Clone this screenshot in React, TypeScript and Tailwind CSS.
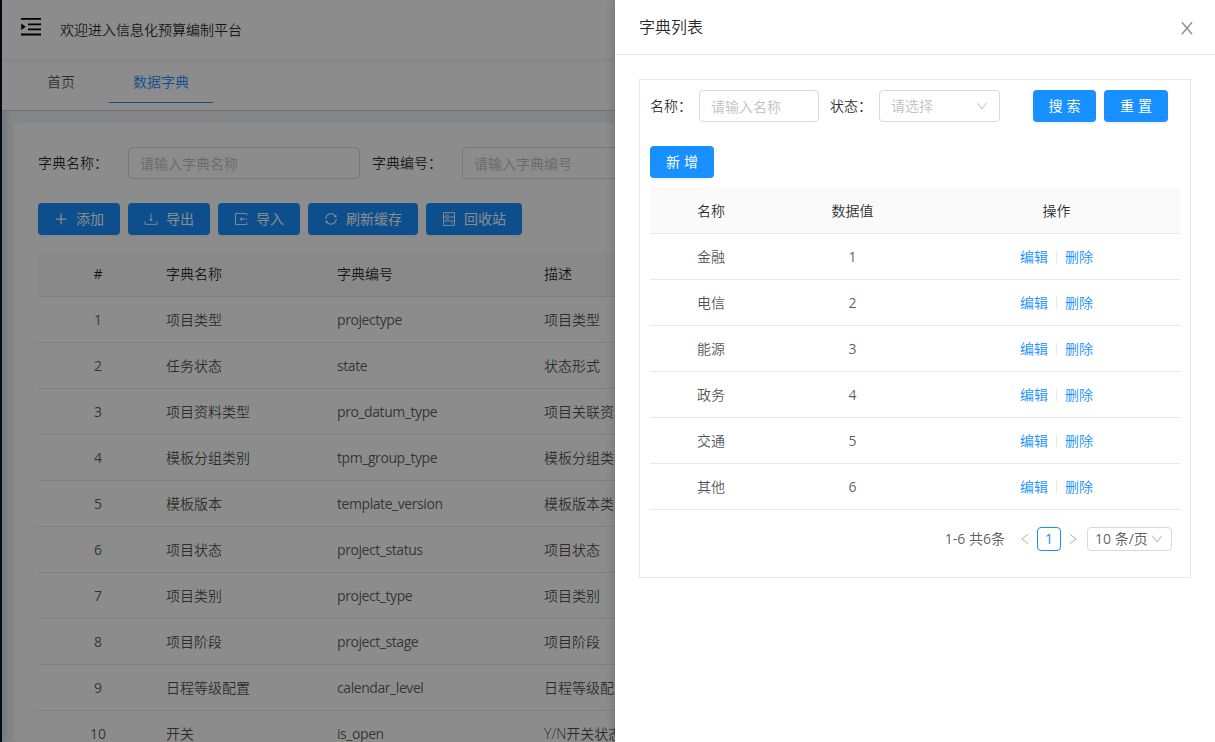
import React from "react";
import { AiOutlineSync } from "react-icons/ai";

type IconProps = { className?: string };

function MenuUnfoldIcon({ className }: IconProps) {
  return (
    <svg viewBox="0 0 24 24" className={className} fill="currentColor">
      <path d="M2 3h20v1.8H2zM9 8.4h13v1.8H9zM9 13.4h13v1.8H9zM2 18.6h20v1.8H2zM2.2 8.6l4.6 3.2-4.6 3.2z" />
    </svg>
  );
}

function PlusIcon({ className }: IconProps) {
  return (
    <svg viewBox="0 0 14 14" className={className} fill="none" stroke="currentColor" strokeWidth="1.3">
      <path d="M7.1 1.6v11M1.8 7.1h10.6" />
    </svg>
  );
}

function DownloadIcon({ className }: IconProps) {
  return (
    <svg viewBox="0 0 14 14" className={className} fill="none" stroke="currentColor" strokeWidth="0.9">
      <path d="M7 1.2v7" />
      <path d="M5.1 6.9h3.8L7 9.2z" fill="currentColor" stroke="none" />
      <path d="M1.2 9.2v3.2h11.6V9.2" />
    </svg>
  );
}

function ImportIcon({ className }: IconProps) {
  return (
    <svg viewBox="0 0 14 14" className={className} fill="none" stroke="currentColor" strokeWidth="0.9">
      <path d="M12.8 3.6V1.5H1.5v11h11.3v-2.1" />
      <path d="M7.4 7h5.4" />
      <path d="M8 5.1v3.8L5.6 7z" fill="currentColor" stroke="none" />
    </svg>
  );
}

function ArchiveIcon({ className }: IconProps) {
  return (
    <svg viewBox="0 0 14 14" className={className} fill="none" stroke="currentColor" strokeWidth="0.95">
      <path d="M1.5.6h11v12.8h-11zM1.5 5h11M1.5 9h11" />
      <path d="M3.6 3h3.2M3.6 7h3.2M9.2 11h1.2" />
    </svg>
  );
}

function CloseIcon({ className }: IconProps) {
  return (
    <svg viewBox="0 0 16 16" className={className} fill="none" stroke="currentColor" strokeWidth="1.35">
      <path d="M2.9 2.2l10.2 12M13.1 2.2l-10.2 12" />
    </svg>
  );
}

function DownIcon({ className }: IconProps) {
  return (
    <svg viewBox="0 0 12 12" className={className} fill="none" stroke="currentColor">
      <path d="M1.2 2.6L6 9l4.8-6.4" />
    </svg>
  );
}

function LeftIcon({ className }: IconProps) {
  return (
    <svg viewBox="0 0 12 12" className={className} fill="none" stroke="currentColor">
      <path d="M9.2 1.3L2.8 6l6.4 4.7" />
    </svg>
  );
}

function RightIcon({ className }: IconProps) {
  return (
    <svg viewBox="0 0 12 12" className={className} fill="none" stroke="currentColor">
      <path d="M2.8 1.3L9.2 6l-6.4 4.7" />
    </svg>
  );
}

const toolbar = [
  { label: "添加", Icon: PlusIcon, width: "w-[82px]" },
  { label: "导出", Icon: DownloadIcon, width: "w-[82px]" },
  { label: "导入", Icon: ImportIcon, width: "w-[82px]" },
  { label: "刷新缓存", Icon: AiOutlineSync, width: "w-[110px]" },
  { label: "回收站", Icon: ArchiveIcon, width: "w-[96px]" },
];

const dictionaries = [
  ["1", "项目类型", "projectype", "项目类型"],
  ["2", "任务状态", "state", "状态形式"],
  ["3", "项目资料类型", "pro_datum_type", "项目关联资料类型"],
  ["4", "模板分组类别", "tpm_group_type", "模板分组类别"],
  ["5", "模板版本", "template_version", "模板版本类型"],
  ["6", "项目状态", "project_status", "项目状态"],
  ["7", "项目类别", "project_type", "项目类别"],
  ["8", "项目阶段", "project_stage", "项目阶段"],
  ["9", "日程等级配置", "calendar_level", "日程等级配置"],
  ["10", "开关", "is_open", "Y/N开关状态"],
];

const items = ["金融", "电信", "能源", "政务", "交通", "其他"];

function PrimaryButton({ children, className }: { children: React.ReactNode; className: string }) {
  return (
    <button
      className={`flex h-8 shrink-0 items-center justify-center rounded bg-[#1890ff] font-normal text-white shadow-[0_2px_0_rgba(0,0,0,0.045)] ${className}`}
    >
      {children}
    </button>
  );
}

function DictionaryPage() {
  return (
    <div className="flex h-full w-full">
      <div className="z-10 w-0.5 shrink-0 bg-[#001529] shadow-[2px_0_6px_rgba(0,21,41,0.35)]" />
      <div className="flex min-w-0 flex-1 flex-col bg-[#f0f2f5]">
        <header className="z-20 flex h-[59px] shrink-0 items-center bg-white pb-px pl-[17px] shadow-[0_1px_4px_rgba(0,21,41,0.12)]">
          <MenuUnfoldIcon className="-mt-1 size-6 text-black" />
          <span className="ml-[17px] text-black/85">欢迎进入信息化预算编制平台</span>
        </header>
        <nav className="z-10 flex h-[52px] shrink-0 items-start border-b border-[#ccc] bg-white pt-px pl-[17px]">
          <span className="flex h-[43px] w-[84px] items-center justify-center">首页</span>
          <span className="ml-[6px] flex h-[43px] w-[104px] items-center justify-center border-b border-[#1890ff] text-[#1890ff]">
            数据字典
          </span>
        </nav>
        <main className="mt-3 ml-3 flex min-h-0 flex-1 flex-col overflow-hidden rounded-sm bg-white pl-6">
          <div className="mt-6 flex h-8 shrink-0 items-center text-black/85">
            <span className="w-[90px] shrink-0 pb-0.5">字典名称：</span>
            <div className="flex h-8 w-[232px] shrink-0 items-center rounded border border-[#d9d9d9] px-[11px] text-[#bfbfbf]">
              请输入字典名称
            </div>
            <span className="ml-3 w-[90px] shrink-0 pb-0.5">字典编号：</span>
            <div className="flex h-8 w-[232px] shrink-0 items-center rounded border border-[#d9d9d9] px-[11px] text-[#bfbfbf]">
              请输入字典编号
            </div>
          </div>
          <div className="mt-6 flex gap-2">
            {toolbar.map(({ label, Icon, width }) => (
              <PrimaryButton key={label} className={`gap-2 ${width}`}>
                <Icon className="size-3.5" />
                <span className="pb-0.5">{label}</span>
              </PrimaryButton>
            ))}
          </div>
          <div className="mt-4 w-[1100px]">
            <div className="flex h-[46px] items-center rounded-t border-b border-[#e8e8e8] bg-[#fafafa] text-black/85">
              <span className="w-[120px] text-center font-normal">#</span>
              <span className="ml-2 w-[171px]">字典名称</span>
              <span className="w-[207px]">字典编号</span>
              <span>描述</span>
            </div>
            {dictionaries.map(([id, name, code, note]) => (
              <div key={id} className="flex h-[46px] items-center border-b border-[#e8e8e8]">
                <span className="w-[120px] text-center font-normal text-black/65">{id}</span>
                <span className="ml-2 w-[171px]">{name}</span>
                <span className="w-[207px] font-normal tracking-[-0.43px] text-black/65">{code}</span>
                <span>{note}</span>
              </div>
            ))}
          </div>
        </main>
      </div>
    </div>
  );
}

function Drawer() {
  return (
    <aside className="absolute inset-y-0 right-0 z-40 flex w-[600px] flex-col bg-white shadow-[-2px_0_8px_rgba(0,0,0,0.15)]">
      <div className="flex h-[55px] shrink-0 items-center justify-between border-b border-[#e8e8e8] pr-5 pl-6">
        <h2 className="text-base font-[350] text-black/85">字典列表</h2>
        <CloseIcon className="mt-0.5 size-4 text-black/45" />
      </div>
      <section className="mx-6 mt-6 flex h-[499px] w-[552px] flex-col border border-[#e8e8e8] px-2.5 pt-2.5">
        <div className="flex h-8 items-center text-black/85">
          <span className="w-[49px] shrink-0 pb-0.5">名称：</span>
          <div className="flex h-8 w-[120px] items-center rounded border border-[#d9d9d9] px-[11px] text-[#bfbfbf]">
            请输入名称
          </div>
          <span className="ml-[11px] w-[49px] shrink-0 pb-0.5">状态：</span>
          <div className="flex h-8 w-[121px] items-center justify-between rounded border border-[#d9d9d9] px-[11px] text-[#bfbfbf]">
            <span className="pb-0.5">请选择</span>
            <DownIcon className="size-3" />
          </div>
          <PrimaryButton className="ml-[33px] w-[63px] gap-1 pb-0.5">
            <span>搜</span>
            <span>索</span>
          </PrimaryButton>
          <PrimaryButton className="ml-2 w-16 gap-1 pb-0.5">
            <span>重</span>
            <span>置</span>
          </PrimaryButton>
        </div>
        <div className="mt-6 flex">
          <PrimaryButton className="w-16 gap-1 pb-0.5">
            <span>新</span>
            <span>增</span>
          </PrimaryButton>
        </div>
        <div className="mt-2.5">
          <div className="flex h-[46px] items-center rounded-t border-b border-[#e8e8e8] bg-[#fafafa] text-center text-black/85">
            <span className="w-[122px]">名称</span>
            <span className="w-[161px]">数据值</span>
            <span className="w-[247px]">操作</span>
          </div>
          {items.map((name, i) => (
            <div key={name} className="flex h-[46px] items-center border-b border-[#e8e8e8] text-center">
              <span className="w-[122px]">{name}</span>
              <span className="w-[161px] font-normal text-black/65">{i + 1}</span>
              <div className="flex w-[247px] items-center justify-center text-[#1890ff]">
                <span>编辑</span>
                <span className="mx-2 h-3 w-px bg-[#e8e8e8]" />
                <span>删除</span>
              </div>
            </div>
          ))}
        </div>
        <div className="mt-[17px] flex h-6 items-center justify-end pr-2 font-normal text-black/65">
          <span className="pb-0.5">1-6 共6条</span>
          <LeftIcon className="ml-3.5 size-3 text-black/30" />
          <span className="ml-1.5 flex size-6 items-center justify-center rounded border border-[#1890ff] pb-0.5 text-[#1890ff]">
            1
          </span>
          <RightIcon className="ml-1.5 size-3 text-black/30" />
          <div className="ml-2 flex h-6 w-[85px] items-center justify-between rounded border border-[#d9d9d9] pr-2 pl-[7px]">
            <span className="pb-0.5">10 条/页</span>
            <DownIcon className="size-3 text-black/30" />
          </div>
        </div>
      </section>
    </aside>
  );
}

export default function App() {
  return (
    <div className="relative h-[742px] w-[1215px] overflow-hidden bg-white font-['Open_Sans','Noto_Sans_CJK_SC',sans-serif] text-sm leading-[21px] font-[350] whitespace-nowrap text-black/70">
      <DictionaryPage />
      <div className="absolute inset-0 z-30 bg-black/45" />
      <Drawer />
    </div>
  );
}
